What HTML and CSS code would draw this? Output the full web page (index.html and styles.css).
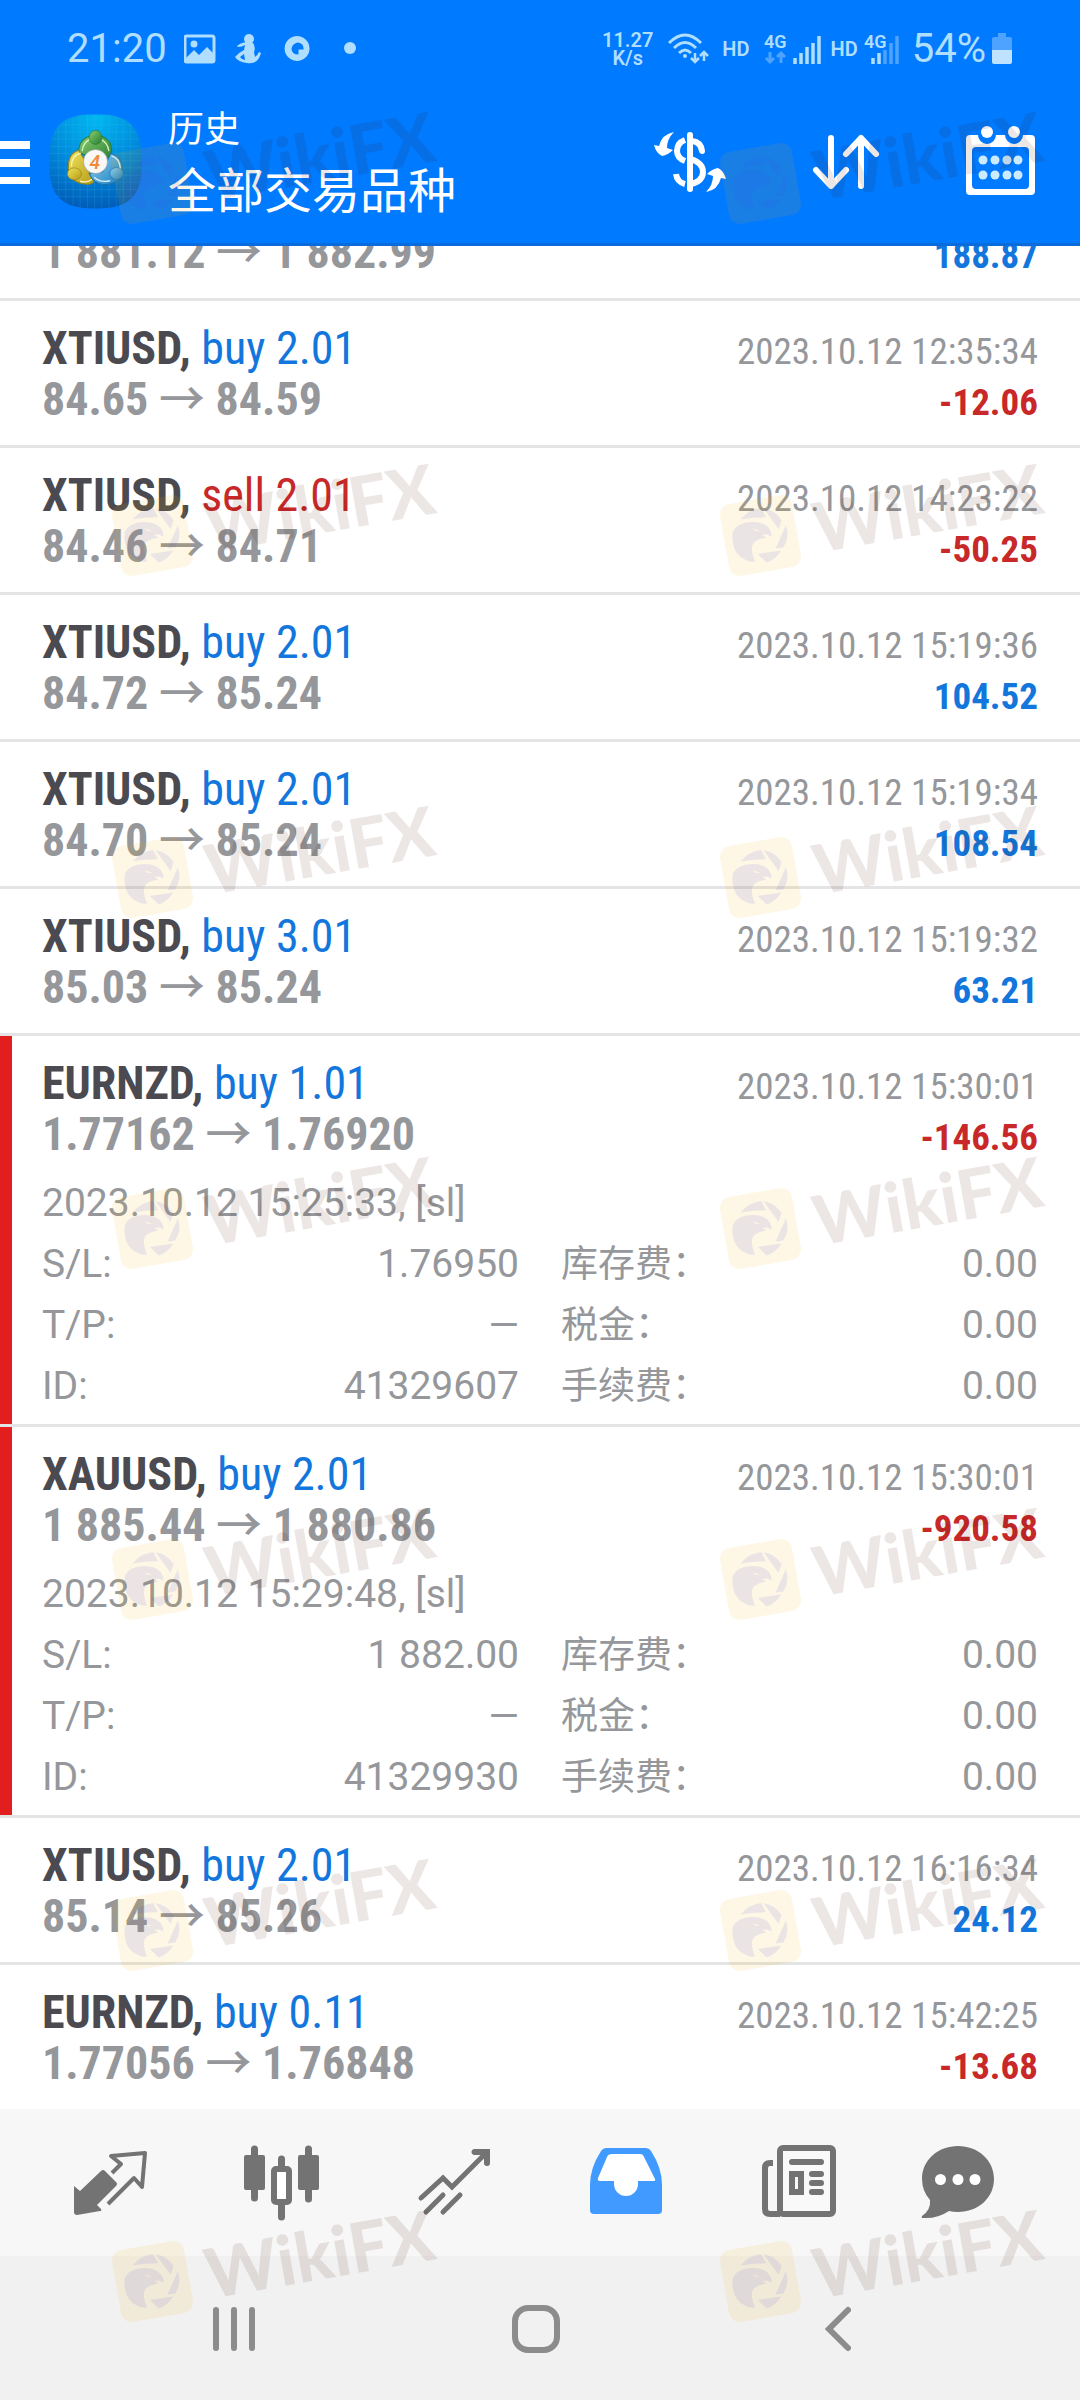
FILE: index.html
```html
<!DOCTYPE html>
<html lang="zh-CN">
<head>
<meta charset="utf-8">
<meta name="viewport" content="width=device-width, initial-scale=1">
<title>历史</title>
<link rel="stylesheet" href="styles.css">
</head>
<body>
<div class="app">
  <header class="header">
    <div class="status">
      <span class="status-time">21:20</span>
      <svg class="status-notes" width="172" height="32" viewBox="0 0 172 32" aria-hidden="true">
        <rect x="1" y="3" width="29" height="26" rx="2" fill="none" stroke="currentColor" stroke-width="3"/>
        <circle cx="10" cy="11" r="3.500" fill="currentColor"/>
        <path d="M1 26l9-9 5 5 8-8 7 7v8H1z" fill="currentColor"/>
        <circle cx="65" cy="6" r="5" fill="currentColor"/>
        <path d="M62 9q-6 1-9 4l1 1q4 0 7-2l-1 5q-6 3-9 7 3 5 12 6 11 2 14-10l-2-1q-2 4-4 5l-1-5q2-5-1-9zM56 24l4-3 1 6q-3 0-5-3z" fill="currentColor" fill-rule="evenodd"/>
        <path d="M113 3a12.500 12.500 0 1 0 0.100 0zM114 9.500q6 1 5.500 7l-5 0 0 5q-7 0-7-6 1-5 6.500-6z" fill="currentColor" fill-rule="evenodd"/>
        <circle cx="166" cy="15" r="6" fill="currentColor"/>
      </svg>
      <span class="status-speed">11.27<br>K/s</span>
      <svg class="status-wifi" width="41" height="32" viewBox="0 0 41 32" aria-hidden="true" fill="none" stroke="currentColor" stroke-width="3">
        <path d="M1 10q16-16 32 0M6 15q11-11 22 0M11 20q6-6 12 0"/>
        <circle cx="17" cy="23" r="2" fill="currentColor" stroke="none"/>
        <path d="M27 20v9m-4-4 4 4 4-4M36 28v-9m-4 4 4-4 4 4" stroke-width="2.500"/>
      </svg>
      <span class="status-hd">HD</span>
      <svg class="status-cell" width="57" height="32" viewBox="0 0 57 32" aria-label="4G">
        <text x="0" y="15" class="cell-text">4G</text>
        <path d="M6 19v10m-4-4 4 4 4-4M17 30V20m-4 4 4-4 4 4" class="cell-dim" fill="none" stroke-width="3"/>
        <path d="M31 25v6M37 20v11M43 14v17M49 10v21M55 3v28" stroke="currentColor" stroke-width="3.500"/>
      </svg>
      <span class="status-hd">HD</span>
      <svg class="status-cell-weak" width="35" height="32" viewBox="0 0 35 32" aria-label="4G">
        <path d="M21 17v14M27 10v21M33 3v28" class="cell-dim" stroke-width="3.500"/>
        <text x="0" y="15" class="cell-text">4G</text>
        <path d="M9 25v6M15 20v11" stroke="currentColor" stroke-width="3.500"/>
      </svg>
      <span class="status-percent">54%</span>
      <svg class="status-battery" width="20" height="32" viewBox="0 0 20 32" aria-hidden="true">
        <path d="M6 0h8v4h4q2 0 2 2v11H0V6q0-2 2-2h4z" fill="#4da3ff"/>
        <path d="M0 17h20v12q0 2-2 2H2q-2 0-2-2z" fill="#bfe2ff"/>
      </svg>
    </div>

    <div class="bar">
      <button class="icon-button" aria-label="菜单">
        <svg width="30" height="44" viewBox="0 0 30 44"><path d="M0 5h30M0 23h30M0 41h30" stroke="#fff" stroke-width="8"/></svg>
      </button>
      <svg class="logo" width="95" height="95" viewBox="27 29 282 284" role="img" aria-label="MetaTrader 4">
        <defs>
          <radialGradient id="tile" cx="0.5" cy="0.05" r="1"><stop offset="0" stop-color="#00b8f0"/><stop offset="0.5" stop-color="#008bdc"/><stop offset="1" stop-color="#0057b4"/></radialGradient>
          <linearGradient id="green" x1="0" y1="0" x2="1" y2="1"><stop offset="0" stop-color="#8fd070"/><stop offset="1" stop-color="#1f7a2e"/></linearGradient>
          <linearGradient id="gold" x1="0" y1="0" x2="1" y2="1"><stop offset="0" stop-color="#f0e45a"/><stop offset="1" stop-color="#b59a18"/></linearGradient>
          <linearGradient id="azure" x1="0" y1="0" x2="1" y2="1"><stop offset="0" stop-color="#8fd4f2"/><stop offset="1" stop-color="#1b7cc0"/></linearGradient>
          <clipPath id="squircle"><path d="M168 30C270 30 307 66 307 171S270 312 168 312 29 276 29 171 66 30 168 30z"/></clipPath>
        </defs>
        <g clip-path="url(#squircle)">
          <path d="M27 29h282v284H27z" fill="url(#tile)"/>
          <path d="M58 29v284M79 29v284M101 29v284M122 29v284M144 29v284M165 29v284M187 29v284M208 29v284M230 29v284M251 29v284M273 29v284M27 61h282M27 83h282M27 104h282M27 126h282M27 147h282M27 169h282M27 190h282M27 212h282M27 233h282M27 255h282M27 276h282" stroke="#4cc4f4" stroke-opacity="0.250" stroke-width="2" fill="none"/>
        </g>
        <path d="M167 92q-50 6-49 52l32 12 36 20q34-10 30-45-4-33-49-39z" fill="url(#green)" stroke="#2c7d35" stroke-width="3"/>
        <path d="M128 140q4-32 34-40M208 140q-4-28-30-38" fill="none" stroke="#d6f0c4" stroke-width="4"/>
        <path d="M118 138q-33 8-31 55 6 45 60 46 18-2 20-17l-22-40z" fill="url(#gold)" stroke="#8f8420" stroke-width="3"/>
        <path d="M96 186q0-34 28-40M122 230q20 6 36-6" fill="none" stroke="#fbf5c0" stroke-width="4"/>
        <path d="M213 147q36 8 36 52-6 42-58 41-30-2-42-34l40-4z" fill="url(#azure)" stroke="#1d6fa8" stroke-width="3"/>
        <path d="M216 154q26 8 26 40M164 218q20 18 48 10" fill="none" stroke="#d8f2fc" stroke-width="4"/>
        <ellipse cx="168" cy="99" rx="19" ry="21" fill="url(#green)" stroke="#2c7d35" stroke-width="2"/>
        <ellipse cx="105" cy="208" rx="21" ry="18" fill="url(#gold)" stroke="#8f8420" stroke-width="2"/>
        <ellipse cx="231" cy="207" rx="20" ry="18" fill="url(#azure)" stroke="#1d6fa8" stroke-width="2"/>
        <circle cx="168" cy="171" r="36" fill="#faf8f6" stroke="#8c9aa0" stroke-width="2"/>
        <text x="166" y="192" class="logo-digit">4</text>
      </svg>
      <div class="titles">
        <h1 class="title">历史</h1>
        <p class="subtitle">全部交易品种</p>
      </div>
      <div class="actions">
        <button class="icon-button" aria-label="币种">
          <svg width="72" height="72" viewBox="0 0 72 72" fill="none" stroke="#fff" stroke-width="6">
            <path d="M36 9v54" stroke-linecap="round"/>
            <path d="M38 15q9 1 10 10" stroke-linecap="round"/>
            <path d="M31 14q-8 3-8 11 0 7 8 10M37 33q12 4 12 13t-12 12M31 58q-8-2-9-10"/>
            <path id="turn" d="M20 6Q8 8 5 20L0 19q2 8 8 11 6-1 11-6l-6-2Q13 13 20 6z" fill="#fff" stroke="none"/>
            <use href="#turn" transform="rotate(180 36 36)"/>
          </svg>
        </button>
        <button class="icon-button" aria-label="排序">
          <svg width="72" height="72" viewBox="0 0 72 72" fill="none" stroke="#fff" stroke-width="6" stroke-linecap="round" stroke-linejoin="round">
            <path d="M21 12v48M6 44l15 16 15-16M51 60V12M36 28l15-16 15 16"/>
          </svg>
        </button>
        <button class="icon-button" aria-label="日期">
          <svg width="72" height="72" viewBox="0 0 72 72">
            <path d="M4 9h8a9 9 0 0 0 18 0h9a9 9 0 0 0 18 0h8q4 0 4 4v52q0 4-4 4H4q-4 0-4-4V13q0-4 4-4zM10 21q-4 0-4 4v34q0 4 4 4h49q4 0 4-4V25q0-4-4-4z" fill="#fff" fill-rule="evenodd"/>
            <circle cx="21" cy="6" r="6" fill="#fff"/><circle cx="48" cy="6" r="6" fill="#fff"/>
            <g fill="#cdebff"><circle cx="17" cy="34" r="4.500"/><circle cx="29" cy="34" r="4.500"/><circle cx="41" cy="34" r="4.500"/><circle cx="52" cy="34" r="4.500"/><circle cx="17" cy="49" r="4.500"/><circle cx="29" cy="49" r="4.500"/><circle cx="41" cy="49" r="4.500"/><circle cx="52" cy="49" r="4.500"/></g>
          </svg>
        </button>
      </div>
    </div>
  </header>

  <main class="history">
    <ul class="deals">
      <li class="deal">
        <div class="line"><span><b class="symbol">XAUUSD,</b> <span class="buy">buy 1.01</span></span><time class="time">2023.10.12 12:30:12</time></div>
        <div class="line"><span class="price">1 881.12 <span class="arrow">→</span> 1 882.99</span><span class="amount gain">188.87</span></div>
      </li>
      <li class="deal">
        <div class="line"><span><b class="symbol">XTIUSD,</b> <span class="buy">buy 2.01</span></span><time class="time">2023.10.12 12:35:34</time></div>
        <div class="line"><span class="price">84.65 <span class="arrow">→</span> 84.59</span><span class="amount loss">-12.06</span></div>
      </li>
      <li class="deal">
        <div class="line"><span><b class="symbol">XTIUSD,</b> <span class="sell">sell 2.01</span></span><time class="time">2023.10.12 14:23:22</time></div>
        <div class="line"><span class="price">84.46 <span class="arrow">→</span> 84.71</span><span class="amount loss">-50.25</span></div>
      </li>
      <li class="deal">
        <div class="line"><span><b class="symbol">XTIUSD,</b> <span class="buy">buy 2.01</span></span><time class="time">2023.10.12 15:19:36</time></div>
        <div class="line"><span class="price">84.72 <span class="arrow">→</span> 85.24</span><span class="amount gain">104.52</span></div>
      </li>
      <li class="deal">
        <div class="line"><span><b class="symbol">XTIUSD,</b> <span class="buy">buy 2.01</span></span><time class="time">2023.10.12 15:19:34</time></div>
        <div class="line"><span class="price">84.70 <span class="arrow">→</span> 85.24</span><span class="amount gain">108.54</span></div>
      </li>
      <li class="deal">
        <div class="line"><span><b class="symbol">XTIUSD,</b> <span class="buy">buy 3.01</span></span><time class="time">2023.10.12 15:19:32</time></div>
        <div class="line"><span class="price">85.03 <span class="arrow">→</span> 85.24</span><span class="amount gain">63.21</span></div>
      </li>
      <li class="deal deal-open">
        <div class="line"><span><b class="symbol">EURNZD,</b> <span class="buy">buy 1.01</span></span><time class="time">2023.10.12 15:30:01</time></div>
        <div class="line"><span class="price">1.77162 <span class="arrow">→</span> 1.76920</span><span class="amount loss">-146.56</span></div>
        <div class="details">
          <p class="opened">2023.10.12 15:25:33, [sl]</p>
          <dl class="facts">
            <div class="fact"><dt>S/L:</dt><dd>1.76950</dd></div>
            <div class="fact"><dt class="cjk">库存费：</dt><dd>0.00</dd></div>
            <div class="fact"><dt>T/P:</dt><dd>—</dd></div>
            <div class="fact"><dt class="cjk">税金：</dt><dd>0.00</dd></div>
            <div class="fact"><dt>ID:</dt><dd>41329607</dd></div>
            <div class="fact"><dt class="cjk">手续费：</dt><dd>0.00</dd></div>
          </dl>
        </div>
      </li>
      <li class="deal deal-open">
        <div class="line"><span><b class="symbol">XAUUSD,</b> <span class="buy">buy 2.01</span></span><time class="time">2023.10.12 15:30:01</time></div>
        <div class="line"><span class="price">1 885.44 <span class="arrow">→</span> 1 880.86</span><span class="amount loss">-920.58</span></div>
        <div class="details">
          <p class="opened">2023.10.12 15:29:48, [sl]</p>
          <dl class="facts">
            <div class="fact"><dt>S/L:</dt><dd>1 882.00</dd></div>
            <div class="fact"><dt class="cjk">库存费：</dt><dd>0.00</dd></div>
            <div class="fact"><dt>T/P:</dt><dd>—</dd></div>
            <div class="fact"><dt class="cjk">税金：</dt><dd>0.00</dd></div>
            <div class="fact"><dt>ID:</dt><dd>41329930</dd></div>
            <div class="fact"><dt class="cjk">手续费：</dt><dd>0.00</dd></div>
          </dl>
        </div>
      </li>
      <li class="deal">
        <div class="line"><span><b class="symbol">XTIUSD,</b> <span class="buy">buy 2.01</span></span><time class="time">2023.10.12 16:16:34</time></div>
        <div class="line"><span class="price">85.14 <span class="arrow">→</span> 85.26</span><span class="amount gain">24.12</span></div>
      </li>
      <li class="deal">
        <div class="line"><span><b class="symbol">EURNZD,</b> <span class="buy">buy 0.11</span></span><time class="time">2023.10.12 15:42:25</time></div>
        <div class="line"><span class="price">1.77056 <span class="arrow">→</span> 1.76848</span><span class="amount loss">-13.68</span></div>
      </li>
    </ul>
  </main>

  <nav class="tabs">
    <button class="icon-button" aria-label="行情">
      <svg width="76" height="76" viewBox="0 0 76 76"><path d="M2 41l6 5 21-20q2-2 4 0l11 11q2 2 0 4L25 60l4 4q1 2-1 2L5 70q-3 0-3-3z" fill="currentColor"/><path d="M40 28l9-9-10-8 34-3-3 34-8-9-26 26" fill="none" stroke="currentColor" stroke-width="4" stroke-linejoin="round"/></svg>
    </button>
    <button class="icon-button" aria-label="图表">
      <svg width="76" height="76" viewBox="0 0 76 76"><path d="M10.500 4v49M64.500 4v50M37.500 14v10M37.500 58v14" stroke="currentColor" stroke-width="7" stroke-linecap="round"/><rect y="10" width="21" height="35" rx="2" fill="currentColor"/><rect x="54" y="10" width="21" height="35" rx="2" fill="currentColor"/><rect x="30" y="24" width="15" height="33" rx="2" fill="#fff" stroke="currentColor" stroke-width="6"/></svg>
    </button>
    <button class="icon-button" aria-label="交易">
      <svg width="76" height="76" viewBox="0 0 76 76" fill="none" stroke="currentColor" stroke-width="5" stroke-linecap="round"><path d="M5 53l22-20 9 9L70 8M58 7h13v11"/><path d="M59 7h12v11" stroke-width="6"/><path d="M10 67l17-17M27 67l17-17"/></svg>
    </button>
    <button class="icon-button tab-active" aria-label="历史" aria-current="page">
      <svg width="76" height="76" viewBox="0 0 76 76"><path d="M18 3h40q3 0 5 3 11 17 11 34v25q0 4-4 4H6q-4 0-4-4V40Q2 23 13 6q2-3 5-3z" fill="currentColor"/><path d="M24 9h28q3 0 4 3l11 22q1 2-2 2H50v3a12 12 0 0 1-24 0v-3H12q-3 0-2-3l9-21q1-3 5-3z" fill="#fff"/></svg>
    </button>
    <button class="icon-button" aria-label="新闻">
      <svg width="76" height="76" viewBox="0 0 76 76" fill="none" stroke="currentColor" stroke-width="6"><rect x="20" y="3" width="53" height="66" rx="3" fill="#f9f9f9"/><path d="M13 18h-3q-5 0-5 5v41q0 5 5 5h10"/><path d="M32 17h29M52 29h9M52 38h9M52 47h9" stroke-linecap="round"/><rect x="32" y="29" width="9" height="18"/></svg>
    </button>
    <button class="icon-button" aria-label="消息">
      <svg width="76" height="76" viewBox="0 0 76 76"><path d="M38 1c20 0 36 14 36 33S58 67 38 67q-5 0-9-1Q17 74 3 73q-2 0-1-2 9-6 8-16Q2 46 2 34C2 15 18 1 38 1z" fill="currentColor"/><circle cx="20.500" cy="34.500" r="5.500" fill="#fff"/><circle cx="38" cy="34.500" r="5.500" fill="#fff"/><circle cx="55" cy="34.500" r="5.500" fill="#fff"/></svg>
    </button>
  </nav>

  <div class="system">
    <button class="icon-button" aria-label="最近任务">
      <svg width="42" height="46" viewBox="0 0 42 46"><path d="M3 4v38M21 4v38M39 4v38" stroke="currentColor" stroke-width="6" stroke-linecap="round"/></svg>
    </button>
    <button class="icon-button" aria-label="主页">
      <svg width="48" height="48" viewBox="0 0 48 48"><rect x="3" y="3" width="42" height="42" rx="13" fill="none" stroke="currentColor" stroke-width="6"/></svg>
    </button>
    <button class="icon-button" aria-label="返回">
      <svg width="26" height="46" viewBox="0 0 26 46"><path d="M23 4L4 23l19 19" fill="none" stroke="currentColor" stroke-width="6" stroke-linecap="round"/></svg>
    </button>
  </div>

  <div class="marks" aria-hidden="true">
    <svg class="mark" viewBox="0 -35 340 118">
      <defs>
        <g id="mark">
          <rect x="4" y="4" width="73" height="73" rx="11" transform="rotate(-10 40.500 40.500)" fill="#fab400" fill-opacity="0.100"/>
          <g transform="translate(-20 -49) scale(0.333)" fill="#4942ed" fill-opacity="0.100">
            <path d="M122 221q24-31 62-35l14 28q-42 0-76 7zM191 187q32 4 54 35l-9 27zM258 238q12 36-8 67l-23 3zM244 314q-16 27-44 36l-26-26z"/>
            <path d="M99 256q12-26 56-28 44-2 58 30 3 8 1 14l-12-6-15 1 12 8q-38 6-42 24-4 18 8 48-14 3-30-6-30-14-35-46-5-20-1-39zM158 248q6 10 22 6z" fill-rule="evenodd"/>
          </g>
          <text class="mark-text" transform="translate(98 58) rotate(-10)">WikiFX</text>
        </g>
      </defs>
      <use href="#mark"/>
    </svg>
    <svg class="mark" viewBox="0 -35 340 118"><use href="#mark"/></svg>
    <svg class="mark" viewBox="0 -35 340 118"><use href="#mark"/></svg>
    <svg class="mark" viewBox="0 -35 340 118"><use href="#mark"/></svg>
    <svg class="mark" viewBox="0 -35 340 118"><use href="#mark"/></svg>
    <svg class="mark" viewBox="0 -35 340 118"><use href="#mark"/></svg>
    <svg class="mark" viewBox="0 -35 340 118"><use href="#mark"/></svg>
    <svg class="mark" viewBox="0 -35 340 118"><use href="#mark"/></svg>
    <svg class="mark" viewBox="0 -35 340 118"><use href="#mark"/></svg>
    <svg class="mark" viewBox="0 -35 340 118"><use href="#mark"/></svg>
    <svg class="mark" viewBox="0 -35 340 118"><use href="#mark"/></svg>
    <svg class="mark" viewBox="0 -35 340 118"><use href="#mark"/></svg>
    <svg class="mark" viewBox="0 -35 340 118"><use href="#mark"/></svg>
    <svg class="mark" viewBox="0 -35 340 118"><use href="#mark"/></svg>
  </div>
</div>
</body>
</html>
```
FILE: styles.css
```css
* { box-sizing: border-box; }

body,
h1,
p,
ul,
dl,
dd { margin: 0; padding: 0; }

body {
  background: #fff;
  font-family: Roboto, "Noto Sans CJK SC", sans-serif;
}

svg { display: block; flex: none; }

.app {
  position: relative;
  display: flex;
  flex-direction: column;
  height: 100vh;
  overflow: hidden;
}

.icon-button {
  display: grid;
  place-items: center;
  padding: 0;
  border: 0;
  background: none;
  color: inherit;
}

/* Header */
.header {
  position: relative;
  background: #007aff;
  border-bottom: 3px solid #0a6cdc;
  color: #fff;
}

.status {
  display: flex;
  align-items: center;
  height: 80px;
  padding: 18px 68px 0 67px;
  color: #b0deff;
}

.status-time,
.status-percent { font-size: 40px; line-height: 48px; }
.status-percent { margin-left: 13px; }
.status-notes { margin-left: 17px; }
.status-speed {
  margin-left: auto;
  font-size: 20px;
  font-weight: 600;
  line-height: 18px;
  text-align: center;
}
.status-wifi { margin: 0 13px 0 15px; }
.status-hd { font-size: 20px; font-weight: 600; line-height: 24px; }
.status-cell { margin: 0 10px 0 14px; }
.status-cell-weak { margin-left: 6px; }
.status-battery { margin-left: 6px; }
.cell-text { font-size: 18px; font-weight: 600; fill: currentColor; }
.cell-dim { stroke: #4da3ff; }

.bar {
  display: flex;
  align-items: center;
  height: 163px;
  padding-right: 42px;
}

.logo { margin: 0 25px 0 18px; }
.logo-digit {
  font-size: 58px;
  font-weight: 500;
  font-style: italic;
  text-anchor: middle;
  fill: #f08a3c;
}

.titles { flex: 1; font-family: "Noto Sans CJK SC", sans-serif; }
.title { font-size: 36px; font-weight: 400; line-height: 50px; }
.subtitle { font-size: 48px; line-height: 72px; }
.actions { display: flex; gap: 84px; }

/* Deal list, scrolled part of a row down */
.history {
  flex: 1;
  min-height: 0;
  overflow: hidden;
}

.deals { margin-top: -92px; list-style: none; }

.deal {
  padding: 22px 42px 20px;
  border-bottom: 3px solid #e4e4e6;
  font-family: "Roboto Condensed", "Liberation Sans Narrow", Roboto, sans-serif;
}

.deal-open {
  padding-bottom: 7px;
  background: linear-gradient(#e31e1e, #e31e1e) no-repeat left / 12px 100%;
  background-clip: padding-box;
}

.line {
  display: flex;
  justify-content: space-between;
  align-items: baseline;
  height: 51px;
  font-size: 46px;
  line-height: 51px;
}

.symbol { color: #4a4a50; }
.buy { color: #1276dc; }
.sell { color: #c82828; }
.price { color: #95979b; font-weight: 700; }
.arrow { font-family: "Noto Sans CJK SC", sans-serif; font-weight: 500; line-height: 40px; }
.time { color: #95979b; font-size: 37px; line-height: 40px; }
.amount { font-size: 37px; font-weight: 700; line-height: 40px; }
.gain { color: #1276dc; }
.loss { color: #c82828; }

.details {
  margin-top: 13px;
  color: #95979b;
  font-family: Roboto, "Noto Sans CJK SC", sans-serif;
  font-size: 39px;
  font-weight: 400;
  line-height: 61px;
}

.facts {
  display: grid;
  grid-template-columns: 1fr 1fr;
  column-gap: 42px;
}

.fact { display: flex; justify-content: space-between; height: 61px; }
.cjk { font-size: 37px; }

/* Bottom bars */
.tabs {
  display: grid;
  grid-template-columns: repeat(5, 172fr) 148fr;
  height: 147px;
  padding: 0 48px 0 24px;
  background: #f7f7f7;
  color: #737373;
}

.tab-active { color: #409aff; }

.system {
  display: grid;
  grid-template-columns: repeat(3, 1fr);
  height: 144px;
  padding: 2px 91px 0 83px;
  background: #f1f1f1;
  color: #8c8c8c;
}

/* Watermark overlay */
.marks {
  position: absolute;
  inset: 0;
  display: grid;
  grid-template-columns: repeat(2, 608px);
  grid-template-rows: 352px 342px repeat(5, 351px);
  padding: 108px 0 0 112px;
  overflow: hidden;
  pointer-events: none;
}

.mark { width: 340px; height: 118px; overflow: visible; }

.mark-text {
  font-family: Lato, sans-serif;
  font-size: 69px;
  font-weight: 900;
  fill: #461400;
  fill-opacity: 0.1;
}
```
